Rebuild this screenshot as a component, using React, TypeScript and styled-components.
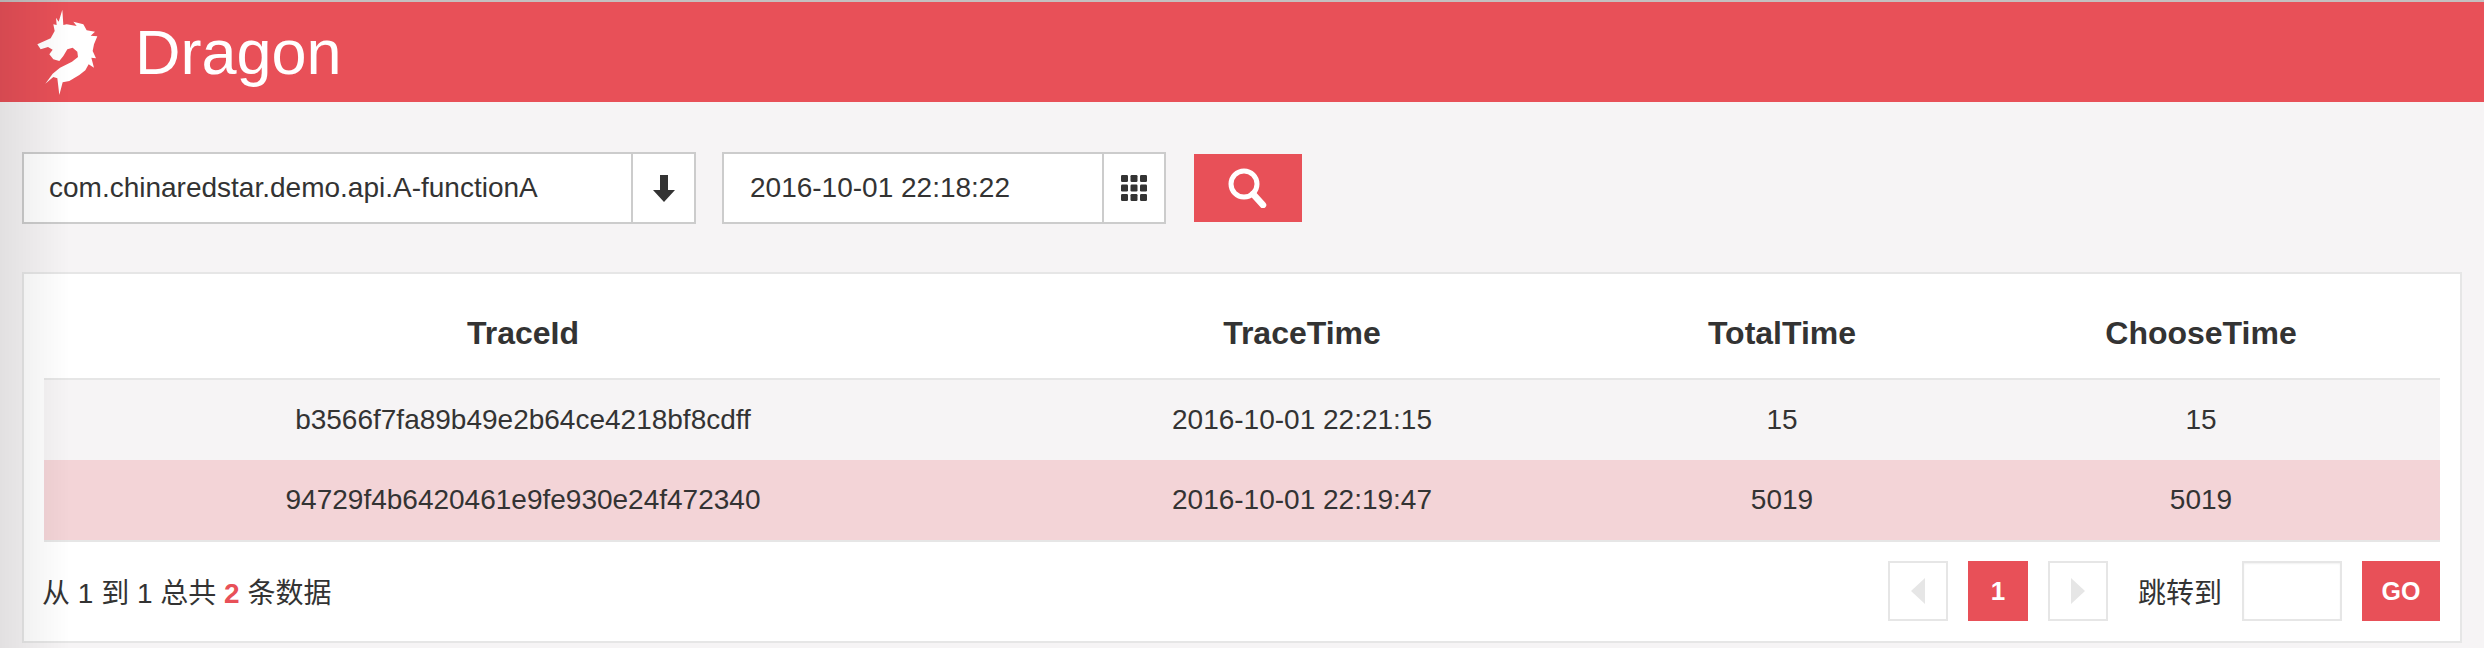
import React from 'react';
import styled, { createGlobalStyle } from 'styled-components';

const RED = '#e85058';
const TEXT = '#333333';
const LINE = '#cccccc';
const SOFT = '#e6e6e6';

const GlobalStyle = createGlobalStyle`
  * { box-sizing: border-box; }
  html, body { margin: 0; height: 100%; overflow: hidden; }
  body {
    background: #f6f4f5;
    color: ${TEXT};
    font-family: "Liberation Sans", "Noto Sans CJK SC", sans-serif;
    font-size: 28px;
  }
  body::before {
    content: '';
    position: fixed;
    top: 0;
    bottom: 0;
    left: 0;
    width: 70px;
    background: linear-gradient(90deg, rgba(0, 0, 0, 0.08), rgba(0, 0, 0, 0));
    pointer-events: none;
    z-index: 5;
  }
`;

const Header = styled.header`
  display: flex;
  align-items: center;
  gap: 25px;
  height: 102px;
  padding-left: 20px;
  background: ${RED};
  border-top: 2px solid #c4c0c0;
`;

const Logo = styled.svg`
  width: 90px;
  height: 100px;
  margin-top: -2px;
`;

const Title = styled.h1`
  margin: 0;
  font-size: 63px;
  font-weight: 400;
  color: #ffffff;
`;

const Main = styled.main`
  padding: 50px 22px 0;
`;

const Toolbar = styled.div`
  display: flex;
  align-items: center;
  height: 72px;
`;

const Field = styled.div<{ $width: number; $gap?: number }>`
  display: flex;
  width: ${(p) => p.$width}px;
  height: 72px;
  margin-right: ${(p) => p.$gap ?? 26}px;
  background: #ffffff;
  border: 2px solid ${LINE};
`;

const FieldText = styled.div<{ $inset?: number }>`
  flex: 1;
  padding-left: ${(p) => p.$inset ?? 25}px;
  line-height: 68px;
  white-space: nowrap;
`;

const FieldAddon = styled.div<{ $width?: number }>`
  display: flex;
  align-items: center;
  justify-content: center;
  width: ${(p) => p.$width ?? 63}px;
  border-left: 2px solid ${LINE};
`;

const SearchButton = styled.button`
  display: flex;
  align-items: center;
  justify-content: center;
  width: 108px;
  height: 68px;
  padding: 0;
  border: none;
  background: ${RED};
`;

const Card = styled.section`
  height: 371px;
  margin-top: 48px;
  padding: 0 20px;
  background: #ffffff;
  border: 2px solid ${SOFT};
`;

const Table = styled.table`
  width: 100%;
  border-collapse: separate;
  border-spacing: 0;
  table-layout: fixed;
`;

const HeadCell = styled.th`
  height: 106px;
  padding: 14px 0 0;
  font-size: 32px;
  font-weight: 700;
  text-align: center;
  border-bottom: 2px solid ${SOFT};
`;

const Row = styled.tr<{ $selected?: boolean }>`
  background: ${(p) => (p.$selected ? '#f3d4d7' : '#f6f4f5')};
`;

const Cell = styled.td<{ $last?: boolean }>`
  height: ${(p) => (p.$last ? 82 : 80)}px;
  padding: 0;
  text-align: center;
  border-bottom: ${(p) => (p.$last ? `2px solid ${SOFT}` : 'none')};
`;

const Footer = styled.div`
  display: flex;
  align-items: center;
  justify-content: space-between;
  height: 99px;
  padding-bottom: 1px;
`;

const Summary = styled.div`
  margin-left: -2px;
`;

const Count = styled.b`
  color: ${RED};
`;

const Pager = styled.div`
  display: flex;
  align-items: center;
  gap: 20px;
`;

const PageButton = styled.button<{ $active?: boolean }>`
  display: flex;
  align-items: center;
  justify-content: center;
  width: 60px;
  height: 60px;
  padding: 0;
  font: 700 26px "Liberation Sans", sans-serif;
  color: #ffffff;
  background: ${(p) => (p.$active ? RED : '#ffffff')};
  border: ${(p) => (p.$active ? 'none' : `2px solid ${SOFT}`)};
`;

const JumpLabel = styled.span`
  margin-left: 10px;
`;

const JumpInput = styled.input`
  width: 100px;
  height: 60px;
  background: #ffffff;
  border: 2px solid ${SOFT};
  box-shadow: inset 0 1px 2px rgba(0, 0, 0, 0.06);
  outline: none;
`;

const GoButton = styled.button`
  width: 78px;
  height: 60px;
  padding: 0;
  font: 700 25px "Liberation Sans", sans-serif;
  color: #ffffff;
  background: ${RED};
  border: none;
`;

const rows = [
  { id: 'b3566f7fa89b49e2b64ce4218bf8cdff', time: '2016-10-01 22:21:15', total: 15, choose: 15 },
  { id: '94729f4b6420461e9fe930e24f472340', time: '2016-10-01 22:19:47', total: 5019, choose: 5019 },
];

const DragonLogo = () => (
  <Logo viewBox="0 0 270 300">
    <defs>
      <filter id="soft">
        <feGaussianBlur stdDeviation="2" />
      </filter>
    </defs>
    <path
      filter="url(#soft)"
      fill="#ffffff"
      d="M127 26 L116 62 L108 50 L110 72 L100 70 L104 90 L92 112 L52 130 L62 145 L84 138 L98 146 L88 160 L100 175 L118 180 L130 165 L142 145 L158 140 L172 152 L174 168 L156 182 L120 200 L98 218 L76 248 L100 228 L112 232 L118 282 L128 244 L148 240 L178 222 L196 208 L206 190 L222 200 L214 170 L228 172 L218 150 L222 130 L232 106 L212 104 L225 92 L200 88 L190 70 L160 62 L170 75 L140 70 L130 72 Z"
    />
  </Logo>
);

const ArrowDownIcon = () => (
  <svg width="22" height="27" viewBox="0 0 22 27">
    <path fill={TEXT} d="M7 0 H15 V15 H22 L11 27 L0 15 H7 Z" />
  </svg>
);

const GridIcon = () => (
  <svg width="26" height="26" viewBox="0 0 26 26">
    {[0, 9.5, 19].flatMap((y) =>
      [0, 9.5, 19].map((x) => <rect key={`${x}-${y}`} x={x} y={y} width="7" height="7" rx="1.2" fill={TEXT} />),
    )}
  </svg>
);

const SearchIcon = () => (
  <svg width="40" height="40" viewBox="0 0 40 40">
    <circle cx="16" cy="16" r="13" fill="none" stroke="#ffffff" strokeWidth="5" />
    <path d="M25 26 L35 37" stroke="#ffffff" strokeWidth="6.5" strokeLinecap="round" />
  </svg>
);

const TriangleIcon = ({ dir }: { dir: 'left' | 'right' }) => (
  <svg width="14" height="26" viewBox="0 0 14 26">
    <path fill={SOFT} d={dir === 'left' ? 'M14 0 V26 L0 13 Z' : 'M0 0 V26 L14 13 Z'} />
  </svg>
);

const App: React.FC = () => (
  <>
    <GlobalStyle />
    <Header>
      <DragonLogo />
      <Title>Dragon</Title>
    </Header>
    <Main>
      <Toolbar>
        <Field $width={674}>
          <FieldText>com.chinaredstar.demo.api.A-functionA</FieldText>
          <FieldAddon>
            <ArrowDownIcon />
          </FieldAddon>
        </Field>
        <Field $width={444} $gap={28}>
          <FieldText $inset={26}>2016-10-01 22:18:22</FieldText>
          <FieldAddon $width={62}>
            <GridIcon />
          </FieldAddon>
        </Field>
        <SearchButton>
          <SearchIcon />
        </SearchButton>
      </Toolbar>
      <Card>
        <Table>
          <colgroup>
            <col width="958" />
            <col width="600" />
            <col width="360" />
            <col width="478" />
          </colgroup>
          <thead>
            <tr>
              <HeadCell>TraceId</HeadCell>
              <HeadCell>TraceTime</HeadCell>
              <HeadCell>TotalTime</HeadCell>
              <HeadCell>ChooseTime</HeadCell>
            </tr>
          </thead>
          <tbody>
            {rows.map((row, i) => {
              const last = i === rows.length - 1;
              return (
                <Row key={row.id} $selected={last}>
                  <Cell $last={last}>{row.id}</Cell>
                  <Cell $last={last}>{row.time}</Cell>
                  <Cell $last={last}>{row.total}</Cell>
                  <Cell $last={last}>{row.choose}</Cell>
                </Row>
              );
            })}
          </tbody>
        </Table>
        <Footer>
          <Summary>
            从 1 到 1 总共 <Count>2</Count> 条数据
          </Summary>
          <Pager>
            <PageButton>
              <TriangleIcon dir="left" />
            </PageButton>
            <PageButton $active>1</PageButton>
            <PageButton>
              <TriangleIcon dir="right" />
            </PageButton>
            <JumpLabel>跳转到</JumpLabel>
            <JumpInput />
            <GoButton>GO</GoButton>
          </Pager>
        </Footer>
      </Card>
    </Main>
  </>
);

export default App;
